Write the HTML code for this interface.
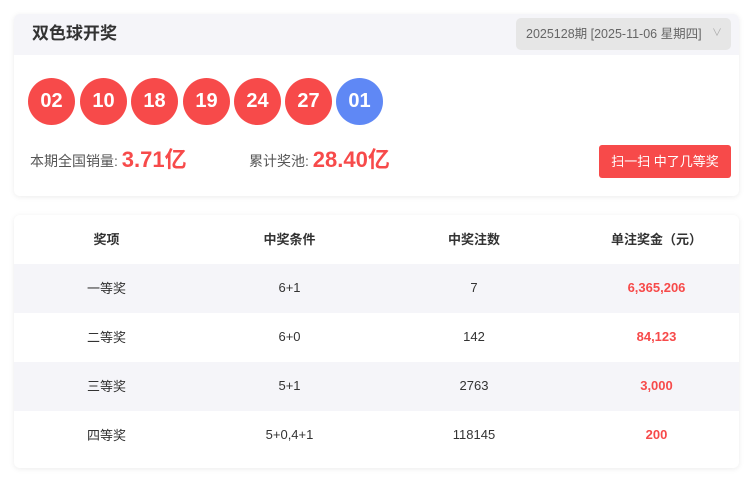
<!DOCTYPE html><html><head><meta charset="utf-8"><style>
body{margin:0;background:#fff;font-family:"Liberation Sans","Noto Sans CJK SC",sans-serif;width:753px;height:485px;overflow:hidden;position:relative}
.card{position:absolute;left:14px;width:725px;background:#fff;box-shadow:0 1px 6px rgba(0,0,0,.08);border-radius:6px;overflow:hidden}
.hd{height:41px;background:#f5f5f9;position:relative}
.hd .t{position:absolute;left:18px;top:9px;font-size:17px;font-weight:bold;color:#333;line-height:22px}
.sel{position:absolute;left:502px;top:4px;width:215px;height:32px;background:#e6e6e6;border-radius:5px;font-size:12.5px;color:#666;line-height:32px;padding-left:10px;box-sizing:border-box}
.sel span{position:absolute;right:9px;color:#aaa;font-size:10px}
.ball{position:absolute;top:64px;width:47px;height:47px;border-radius:50%;background:#f74a4a;color:#fff;font-weight:bold;font-size:20px;text-align:center;line-height:47px}
.lbl{position:absolute;top:132px;font-size:14px;color:#555;line-height:26px}
.num{color:#f74a4a;font-size:22px;font-weight:bold;position:relative;top:1px}
.btn{position:absolute;left:585px;top:131px;width:132px;height:33px;background:#f74a4a;border-radius:3px;color:#fff;font-size:13px;text-align:center;line-height:33px}
.row{height:49px;display:flex;font-size:13px;color:#333;align-items:center;width:760px}
.row div{text-align:center;margin-top:-2px;flex:none}
.c1{width:185px}.c2{width:181px}.c3{width:188px}.c4{width:177px}
.g{background:#f5f5f9}
.r{color:#f74a4a;font-weight:bold}
</style></head><body>
<div class="card" style="top:14px;height:182px">
<div class="hd"><div class="t">双色球开奖</div><div class="sel">2025128期 [2025-11-06 星期四]<span>∨</span></div></div>
<div class="ball" style="left:14px">02</div><div class="ball" style="left:66px">10</div><div class="ball" style="left:117px">18</div><div class="ball" style="left:169px">19</div><div class="ball" style="left:220px">24</div><div class="ball" style="left:271px">27</div><div class="ball" style="left:322px;background:#5f88f5">01</div>
<div class="lbl" style="left:16px">本期全国销量: <span class="num">3.71亿</span></div>
<div class="lbl" style="left:235px">累计奖池: <span class="num">28.40亿</span></div>
<div class="btn">扫一扫 中了几等奖</div>
</div>
<div class="card" style="top:215px;height:253px">
<div class="row" style="font-weight:bold"><div class="c1">奖项</div><div class="c2">中奖条件</div><div class="c3">中奖注数</div><div class="c4">单注奖金（元）</div></div>
<div class="row g"><div class="c1">一等奖</div><div class="c2">6+1</div><div class="c3">7</div><div class="c4 r">6,365,206</div></div>
<div class="row"><div class="c1">二等奖</div><div class="c2">6+0</div><div class="c3">142</div><div class="c4 r">84,123</div></div>
<div class="row g"><div class="c1">三等奖</div><div class="c2">5+1</div><div class="c3">2763</div><div class="c4 r">3,000</div></div>
<div class="row"><div class="c1">四等奖</div><div class="c2">5+0,4+1</div><div class="c3">118145</div><div class="c4 r">200</div></div>
</div>
</body></html>
